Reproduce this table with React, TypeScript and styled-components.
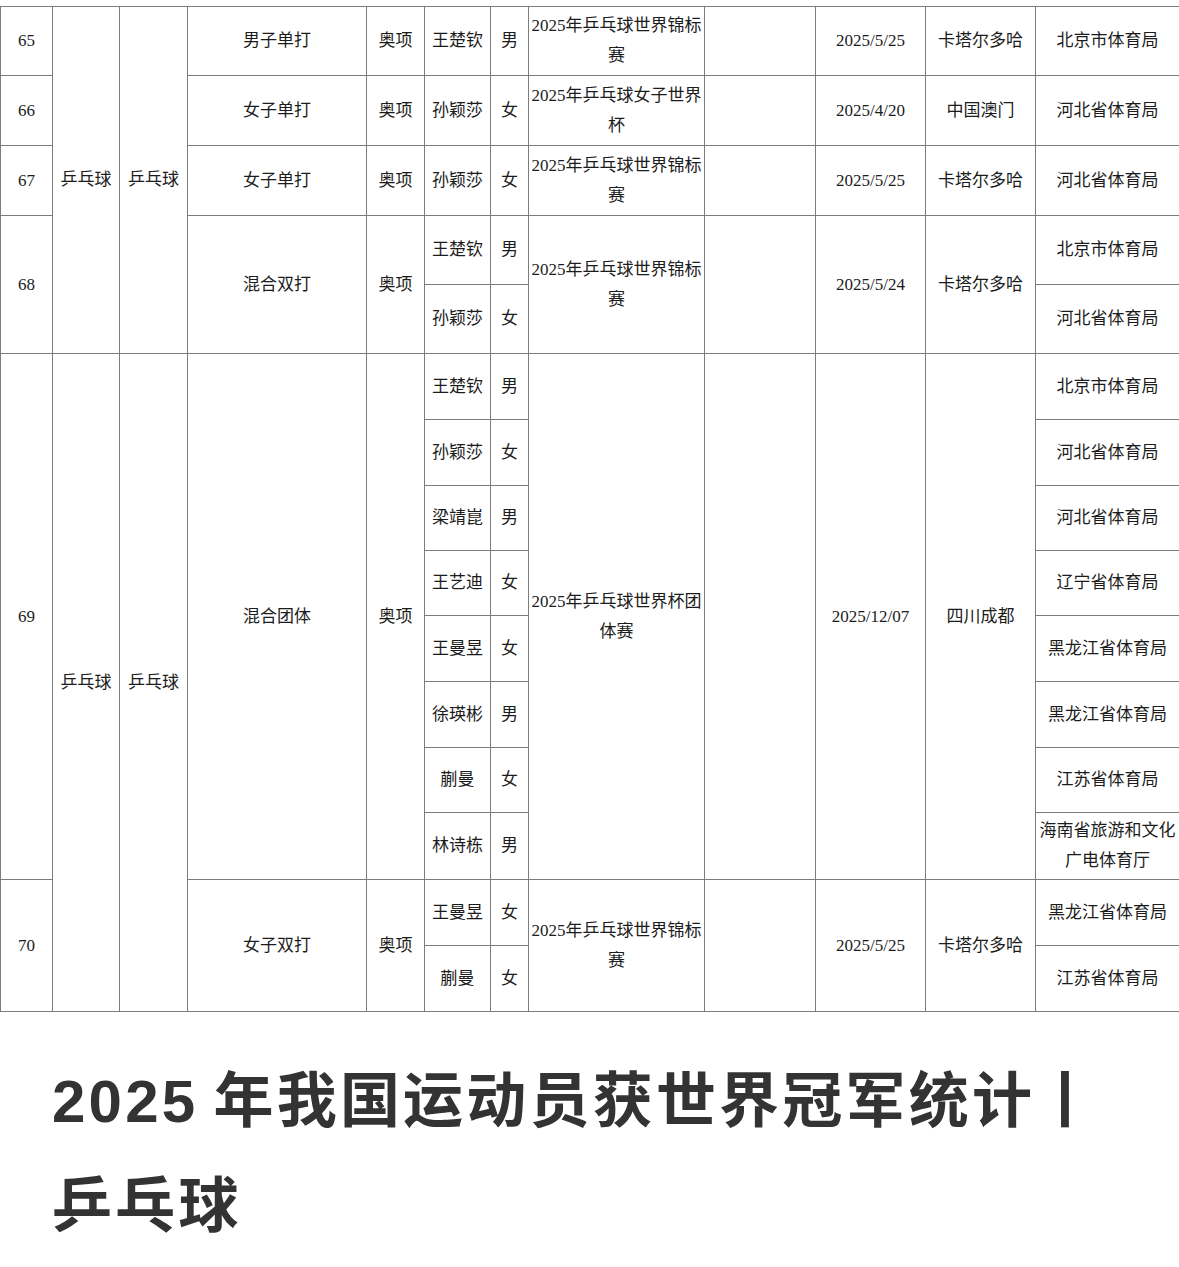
import React from 'react';
import styled, { createGlobalStyle } from 'styled-components';

const GlobalStyle = createGlobalStyle`
  body {
    margin: 0;
    background: #ffffff;
  }
`;

const Page = styled.div`
  width: 1179px;
  padding-top: 6px;
`;

const Table = styled.table`
  width: 1179px;
  table-layout: fixed;
  border-collapse: collapse;
  color: #1c1c1c;
  font-family: "Liberation Serif", "Noto Sans CJK SC", serif;
  font-size: 17px;
`;

const Row = styled.tr<{ $h: number }>`
  height: ${p => p.$h}px;
`;

const Cell = styled.td`
  border: 1px solid #7c7c7c;
  padding: 0 1px;
  text-align: center;
  vertical-align: middle;
  line-height: 30px;
  word-break: break-all;
`;

const Title = styled.h1`
  margin: 37px 0 0;
  padding: 0 52px;
  font-family: "Liberation Sans", "Noto Sans CJK SC", sans-serif;
  font-size: 60px;
  font-weight: 700;
  line-height: 105px;
  letter-spacing: 3.2px;
  color: #333333;
`;

type Player = [string, string, string];

type Entry = {
  no: number;
  project: string;
  players: Player[];
  event: string;
  date: string;
  place: string;
  heights: number[];
};

const groups: Entry[][] = [
  [
    {
      no: 65,
      project: '男子单打',
      players: [['王楚钦', '男', '北京市体育局']],
      event: '2025年乒乓球世界锦标赛',
      date: '2025/5/25',
      place: '卡塔尔多哈',
      heights: [69],
    },
    {
      no: 66,
      project: '女子单打',
      players: [['孙颖莎', '女', '河北省体育局']],
      event: '2025年乒乓球女子世界杯',
      date: '2025/4/20',
      place: '中国澳门',
      heights: [70],
    },
    {
      no: 67,
      project: '女子单打',
      players: [['孙颖莎', '女', '河北省体育局']],
      event: '2025年乒乓球世界锦标赛',
      date: '2025/5/25',
      place: '卡塔尔多哈',
      heights: [70],
    },
    {
      no: 68,
      project: '混合双打',
      players: [
        ['王楚钦', '男', '北京市体育局'],
        ['孙颖莎', '女', '河北省体育局'],
      ],
      event: '2025年乒乓球世界锦标赛',
      date: '2025/5/24',
      place: '卡塔尔多哈',
      heights: [69, 69],
    },
  ],
  [
    {
      no: 69,
      project: '混合团体',
      players: [
        ['王楚钦', '男', '北京市体育局'],
        ['孙颖莎', '女', '河北省体育局'],
        ['梁靖崑', '男', '河北省体育局'],
        ['王艺迪', '女', '辽宁省体育局'],
        ['王曼昱', '女', '黑龙江省体育局'],
        ['徐瑛彬', '男', '黑龙江省体育局'],
        ['蒯曼', '女', '江苏省体育局'],
        ['林诗栋', '男', '海南省旅游和文化广电体育厅'],
      ],
      event: '2025年乒乓球世界杯团体赛',
      date: '2025/12/07',
      place: '四川成都',
      heights: [66, 66, 65, 65, 66, 66, 65, 67],
    },
    {
      no: 70,
      project: '女子双打',
      players: [
        ['王曼昱', '女', '黑龙江省体育局'],
        ['蒯曼', '女', '江苏省体育局'],
      ],
      event: '2025年乒乓球世界锦标赛',
      date: '2025/5/25',
      place: '卡塔尔多哈',
      heights: [66, 66],
    },
  ],
];

const widths = [52, 67, 68, 179, 58, 66, 38, 176, 111, 110, 110, 144];

const App: React.FC = () => {
  const rows: React.ReactNode[] = [];
  groups.forEach((group, gi) => {
    const groupSpan = group.reduce((n, e) => n + e.players.length, 0);
    group.forEach((entry, ei) => {
      const span = entry.players.length;
      entry.players.forEach(([name, gender, unit], pi) => {
        const first = pi === 0;
        rows.push(
          <Row key={`${gi}-${ei}-${pi}`} $h={entry.heights[pi]}>
            {first && <Cell rowSpan={span}>{entry.no}</Cell>}
            {first && ei === 0 && <Cell rowSpan={groupSpan}>乒乓球</Cell>}
            {first && ei === 0 && <Cell rowSpan={groupSpan}>乒乓球</Cell>}
            {first && <Cell rowSpan={span}>{entry.project}</Cell>}
            {first && <Cell rowSpan={span}>奥项</Cell>}
            <Cell>{name}</Cell>
            <Cell>{gender}</Cell>
            {first && <Cell rowSpan={span}>{entry.event}</Cell>}
            {first && <Cell rowSpan={span} />}
            {first && <Cell rowSpan={span}>{entry.date}</Cell>}
            {first && <Cell rowSpan={span}>{entry.place}</Cell>}
            <Cell>{unit}</Cell>
          </Row>
        );
      });
    });
  });

  return (
    <Page>
      <GlobalStyle />
      <Table>
        <colgroup>
          {widths.map((w, i) => (
            <col key={i} style={{ width: w }} />
          ))}
        </colgroup>
        <tbody>{rows}</tbody>
      </Table>
      <Title>{'2025\u2009年我国运动员获世界冠军统计丨乒乓球'}</Title>
    </Page>
  );
};

export default App;
